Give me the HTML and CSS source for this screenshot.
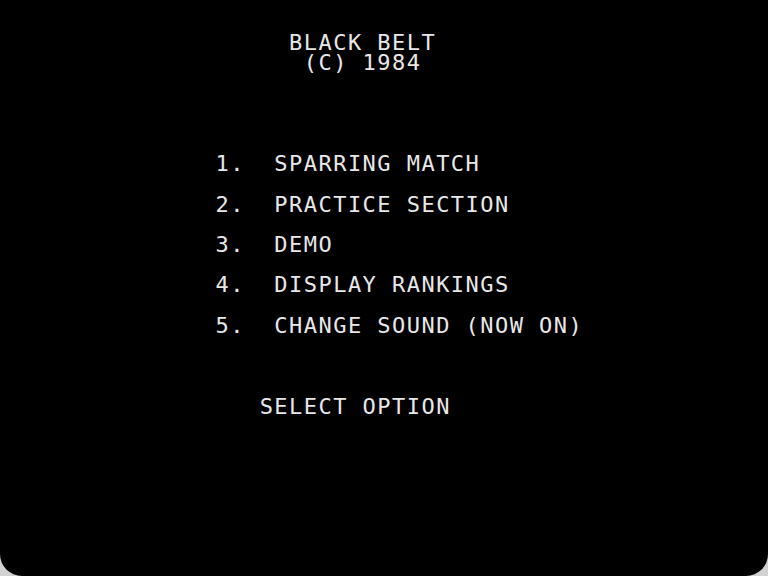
FILE: index.html
```html
<!DOCTYPE html>
<html>
<head>
<meta charset="utf-8">
<title>Black Belt</title>
<link rel="stylesheet" href="styles.css">
</head>
<body>
<div class="screen">
<pre class="text">

               BLACK BELT
                (C) 1984




          1.  SPARRING MATCH

          2.  PRACTICE SECTION

          3.  DEMO

          4.  DISPLAY RANKINGS

          5.  CHANGE SOUND (NOW ON)



             SELECT OPTION
</pre>
</div>
</body>
</html>
```
FILE: styles.css
```css
html, body {
  margin: 0;
  padding: 0;
  background: #d2d2d2;
}
.screen {
  width: 768px;
  height: 576px;
  background: #000;
  border-radius: 0 0 22px 22px;
  overflow: hidden;
}
.text {
  margin: 0;
  padding: 12.7px 0 0 68.5px;
  font-family: "DejaVu Sans Mono", "Liberation Mono", monospace;
  font-size: 22px;
  letter-spacing: 1.46px;
  line-height: 20.2px;
  color: #e8e8e8;
  white-space: pre;
}
```
